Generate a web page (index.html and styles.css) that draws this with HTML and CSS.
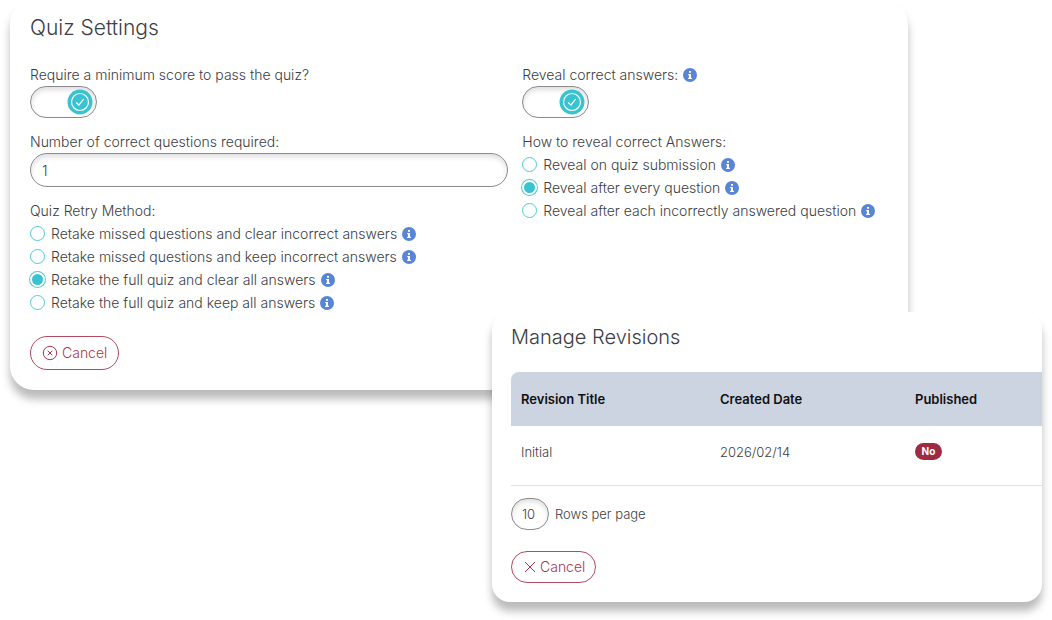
FILE: index.html
```
<!DOCTYPE html>
<html lang="en">
<head>
  <meta charset="UTF-8">
  <meta name="viewport" content="width=device-width, initial-scale=1">
  <title>Quiz Settings</title>
  <link rel="stylesheet" href="styles.css">
</head>
<body>

<svg class="sprite" aria-hidden="true">
  <symbol id="icon-info" viewBox="0 0 14 14">
    <circle cx="7" cy="7" r="7" fill="#5985d8"/>
    <path d="M6 3h2v1.700H6zM5.200 6H8v3.800h.9V11H5.100V9.800H6V7.200h-.8z" fill="#fff"/>
  </symbol>
  <symbol id="icon-cancel" viewBox="0 0 16 16">
    <circle cx="8" cy="8" r="6.700" fill="none" stroke="currentColor"/>
    <path d="M5.700 5.700l4.600 4.600M10.300 5.700l-4.600 4.600" fill="none" stroke="currentColor"/>
  </symbol>
  <symbol id="icon-close" viewBox="0 0 12 12">
    <path d="M1 1l10 10M11 1L1 11" fill="none" stroke="currentColor"/>
  </symbol>
  <symbol id="icon-check" viewBox="0 0 26 26">
    <circle cx="13" cy="13" r="12.500" fill="#38c3d0"/>
    <circle cx="13" cy="13" r="8.500" fill="none" stroke="#fff" stroke-width="1.200"/>
    <path d="M9.300 13.500l2.600 2.700 4.700-6" fill="none" stroke="#fff" stroke-width="1.200"/>
  </symbol>
</svg>

<section class="panel quiz">
  <h2>Quiz Settings</h2>
  <form>
    <div class="columns">
      <div class="column">
        <div class="field">
          <label class="label" for="min-score">Require a minimum score to pass the quiz?</label>
          <span class="toggle">
            <input type="checkbox" id="min-score" checked>
            <svg class="knob"><use href="#icon-check"/></svg>
          </span>
        </div>
        <div class="field">
          <label class="label" for="required">Number of correct questions required:</label>
          <input type="text" class="text-input" id="required" value="1">
        </div>
        <fieldset class="field">
          <legend class="label">Quiz Retry Method:</legend>
          <label class="radio"><input type="radio" name="retry">Retake missed questions and clear incorrect answers<svg class="info"><use href="#icon-info"/></svg></label>
          <label class="radio"><input type="radio" name="retry">Retake missed questions and keep incorrect answers<svg class="info"><use href="#icon-info"/></svg></label>
          <label class="radio"><input type="radio" name="retry" checked>Retake the full quiz and clear all answers<svg class="info"><use href="#icon-info"/></svg></label>
          <label class="radio"><input type="radio" name="retry">Retake the full quiz and keep all answers<svg class="info"><use href="#icon-info"/></svg></label>
        </fieldset>
      </div>
      <div class="column">
        <div class="field">
          <label class="label" for="reveal">Reveal correct answers:<svg class="info"><use href="#icon-info"/></svg></label>
          <span class="toggle">
            <input type="checkbox" id="reveal" checked>
            <svg class="knob"><use href="#icon-check"/></svg>
          </span>
        </div>
        <fieldset class="field">
          <legend class="label">How to reveal correct Answers:</legend>
          <label class="radio"><input type="radio" name="how">Reveal on quiz submission<svg class="info"><use href="#icon-info"/></svg></label>
          <label class="radio"><input type="radio" name="how" checked>Reveal after every question<svg class="info"><use href="#icon-info"/></svg></label>
          <label class="radio"><input type="radio" name="how">Reveal after each incorrectly answered question<svg class="info"><use href="#icon-info"/></svg></label>
        </fieldset>
      </div>
    </div>
    <button type="button" class="btn"><svg class="icon-round"><use href="#icon-cancel"/></svg>Cancel</button>
  </form>
</section>

<section class="panel revisions">
  <h2>Manage Revisions</h2>
  <table>
    <thead>
      <tr><th class="col-title">Revision Title</th><th class="col-date">Created Date</th><th>Published</th></tr>
    </thead>
    <tbody>
      <tr><td>Initial</td><td>2026/02/14</td><td><span class="badge">No</span></td></tr>
    </tbody>
  </table>
  <div class="pager">
    <select id="rows">
      <option>10</option>
      <option>25</option>
      <option>50</option>
    </select>
    <label for="rows">Rows per page</label>
  </div>
  <button type="button" class="btn btn-small"><svg class="icon-x"><use href="#icon-close"/></svg>Cancel</button>
</section>

</body>
</html>
```
FILE: styles.css
```
* {
  box-sizing: border-box;
}
body {
  margin: 0;
  min-height: 100vh;
  background: #fff;
  color: #3b4044;
  font-family: Inter, "Open Sans", sans-serif;
  font-size: 14px;
  font-weight: 300;
  line-height: 22px;
}
input,
select,
button {
  margin: 0;
  font: inherit;
  color: inherit;
}
svg {
  flex: none;
}
.sprite {
  position: absolute;
  width: 0;
  height: 0;
}

/* panels */
.panel {
  background: #fff;
  box-shadow: 0 9px 9px rgba(0, 0, 0, 0.27);
}
.panel h2 {
  margin: 0;
  font-size: 21px;
  font-weight: 300;
  line-height: 30px;
}
.quiz {
  margin: 0 144px 0 10px;
  padding: 13px 20px 20px;
  border-radius: 24px;
}
.quiz h2 {
  margin-bottom: 21px;
}
.revisions {
  position: relative;
  width: 550px;
  max-width: 100%;
  margin: -78px 10px 0 auto;
  padding: 10px 0 19px 19px;
  border-radius: 18px;
}
.revisions h2 {
  margin-bottom: 20px;
  font-size: 20px;
}

/* form */
.columns {
  display: grid;
  grid-template-columns: 17fr 13fr;
  gap: 14px;
  margin-bottom: 22px;
}
.column {
  display: flex;
  flex-direction: column;
  gap: 13px;
}
.field {
  min-width: 0;
  margin: 0;
  padding: 0;
  border: 0;
}
.label {
  display: flex;
  align-items: center;
  padding: 0;
}
.info {
  width: 14px;
  height: 14px;
  margin-left: 5px;
}
.toggle {
  display: block;
  position: relative;
  width: 67px;
  height: 32px;
}
.toggle input {
  display: block;
  appearance: none;
  width: 100%;
  height: 100%;
  border: 1px solid #8a8a8a;
  border-radius: 16px;
  box-shadow: inset 0 3px 5px rgba(0, 0, 0, 0.13);
}
.knob {
  position: absolute;
  top: 3px;
  right: 4px;
  width: 26px;
  height: 26px;
  pointer-events: none;
}
.text-input {
  display: block;
  width: 100%;
  height: 34px;
  padding: 0 11px;
  border: 1px solid #8a8a8a;
  border-radius: 17px;
  background: #fff;
  box-shadow: inset 0 3px 5px rgba(0, 0, 0, 0.13);
}
.radio {
  display: flex;
  align-items: center;
  height: 23px;
}
.radio input {
  appearance: none;
  flex: none;
  width: 15px;
  height: 15px;
  margin-right: 6px;
  border: 1px solid #4ccbd6;
  border-radius: 50%;
}
.radio input:checked {
  border: 2px solid #fff;
  background: #38c3d0;
  box-shadow: 0 0 0 1px #4ccbd6;
}
.btn {
  display: flex;
  align-items: center;
  gap: 4px;
  height: 34px;
  padding: 0 11px;
  border: 1px solid #b34a60;
  border-radius: 17px;
  background: #fff;
  color: #a93550;
}
.icon-round {
  width: 16px;
  height: 16px;
}
.icon-x {
  width: 12px;
  height: 12px;
}
.btn-small {
  height: 32px;
  padding: 0 10px 0 12px;
}

/* revisions table */
table {
  width: 100%;
  border-collapse: separate;
  border-spacing: 0;
  table-layout: fixed;
  font-size: 13px;
}
th,
td {
  padding: 0 10px;
  text-align: left;
}
th {
  height: 54px;
  background: #ccd3e1;
  color: #111;
  font-weight: 600;
}
th:first-child {
  border-top-left-radius: 8px;
}
td {
  height: 60px;
  padding-bottom: 8px;
  border-bottom: 1px solid #e3e3e3;
}
.col-title {
  width: 199px;
}
.col-date {
  width: 195px;
}
.badge {
  display: block;
  width: 27px;
  border-radius: 9px;
  background: #9f2b42;
  color: #fff;
  font-size: 10px;
  font-weight: 700;
  line-height: 17px;
  text-align: center;
}
.pager {
  display: flex;
  align-items: center;
  gap: 6px;
  margin: 12px 0 21px;
  font-size: 13px;
}
.pager select {
  appearance: none;
  width: 38px;
  height: 32px;
  padding: 0 0 0 10px;
  border: 1px solid #8a8a8a;
  border-radius: 16px;
  background: #fff;
  box-shadow: inset 0 3px 5px rgba(0, 0, 0, 0.13);
}
```
